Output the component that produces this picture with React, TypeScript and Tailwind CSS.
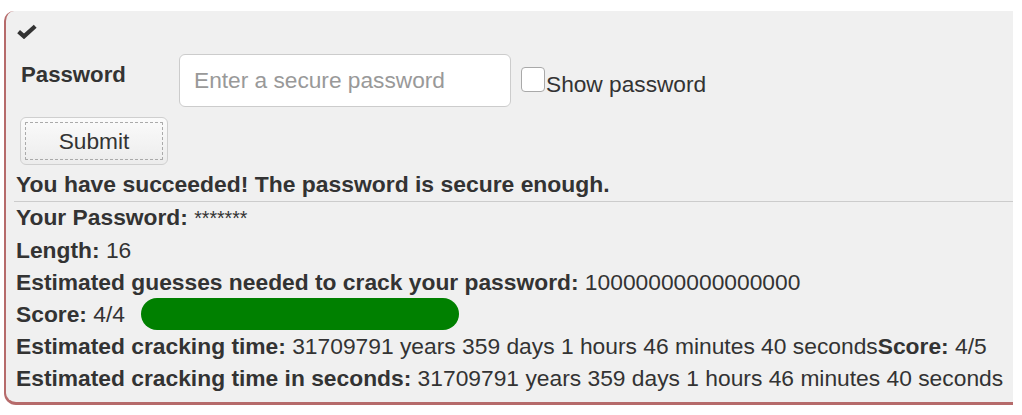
import React from "react";

const font = { fontFamily: '"Liberation Sans", Arial, sans-serif' };

export default function App() {
  return (
    <div className="w-full h-[415px] bg-white pt-[11px] pl-[4px]" style={font}>
      <div className="w-[1009px] h-[394px] bg-[#f0f0f0] border-l-2 border-b-[3px] border-[#b66b6b] rounded-tl-[10px] rounded-bl-[12px] pl-[10px] text-[22.7px] leading-[32px] text-[#333]">
        <div className="pt-[13px] pl-[1px]">
          <svg width="20" height="15" viewBox="0 0 20 15" className="block">
            <path d="M1.6 7.6 L7 12.4 L18.2 2.2" fill="none" stroke="#333" strokeWidth="4.2" strokeLinejoin="miter" />
          </svg>
        </div>

        <div className="flex items-start mt-[15px]">
          <label className="w-[163px] pl-[5px] pt-[5px] font-bold text-[22.2px]">Password</label>
          <input
            type="password"
            placeholder="Enter a secure password"
            className="w-[332px] h-[53px] bg-white border border-[#ccc] rounded-[6px] pl-[14px] text-[22.7px] placeholder:text-[#999] focus:outline-none"
          />
          <input
            type="checkbox"
            className="appearance-none ml-[10px] mt-[13px] w-[24px] h-[25px] bg-white border border-[#a9a9a9] rounded-[4px]"
          />
          <span className="ml-[1px] mt-[14px]">Show password</span>
        </div>

        <button className="block ml-[4px] mt-[10px] w-[148px] h-[48px] rounded-[6px] border border-[#cfcfcf] bg-gradient-to-b from-[#fbfbfb] to-[#ececec] text-[22.7px] text-[#333] outline-1 outline-dashed outline-[#aaa] outline-offset-[-6px]">
          Submit
        </button>

        <div className="mt-[3px] font-bold text-[22.9px]">You have succeeded! The password is secure enough.</div>
        <div className="-ml-[2px] mt-[1px] border-t border-[#ccc]" />

        <div className="whitespace-nowrap text-[22.8px] -mt-[1px]">
          <div>
            <b>Your Password:</b> <span className="text-[19.5px]">*******</span>
          </div>
          <div>
            <b>Length:</b> 16
          </div>
          <div>
            <b>Estimated guesses needed to crack your password:</b> 10000000000000000
          </div>
          <div className="flex items-center">
            <span>
              <b>Score:</b> 4/4
            </span>
            <div className="ml-[16px] w-[318px] h-[32px] rounded-full bg-[#008000]" />
          </div>
          <div>
            <b>Estimated cracking time:</b> 31709791 years 359 days 1 hours 46 minutes 40 seconds<b>Score:</b> 4/5
          </div>
          <div>
            <b>Estimated cracking time in seconds:</b> 31709791 years 359 days 1 hours 46 minutes 40 seconds
          </div>
        </div>
      </div>
    </div>
  );
}
